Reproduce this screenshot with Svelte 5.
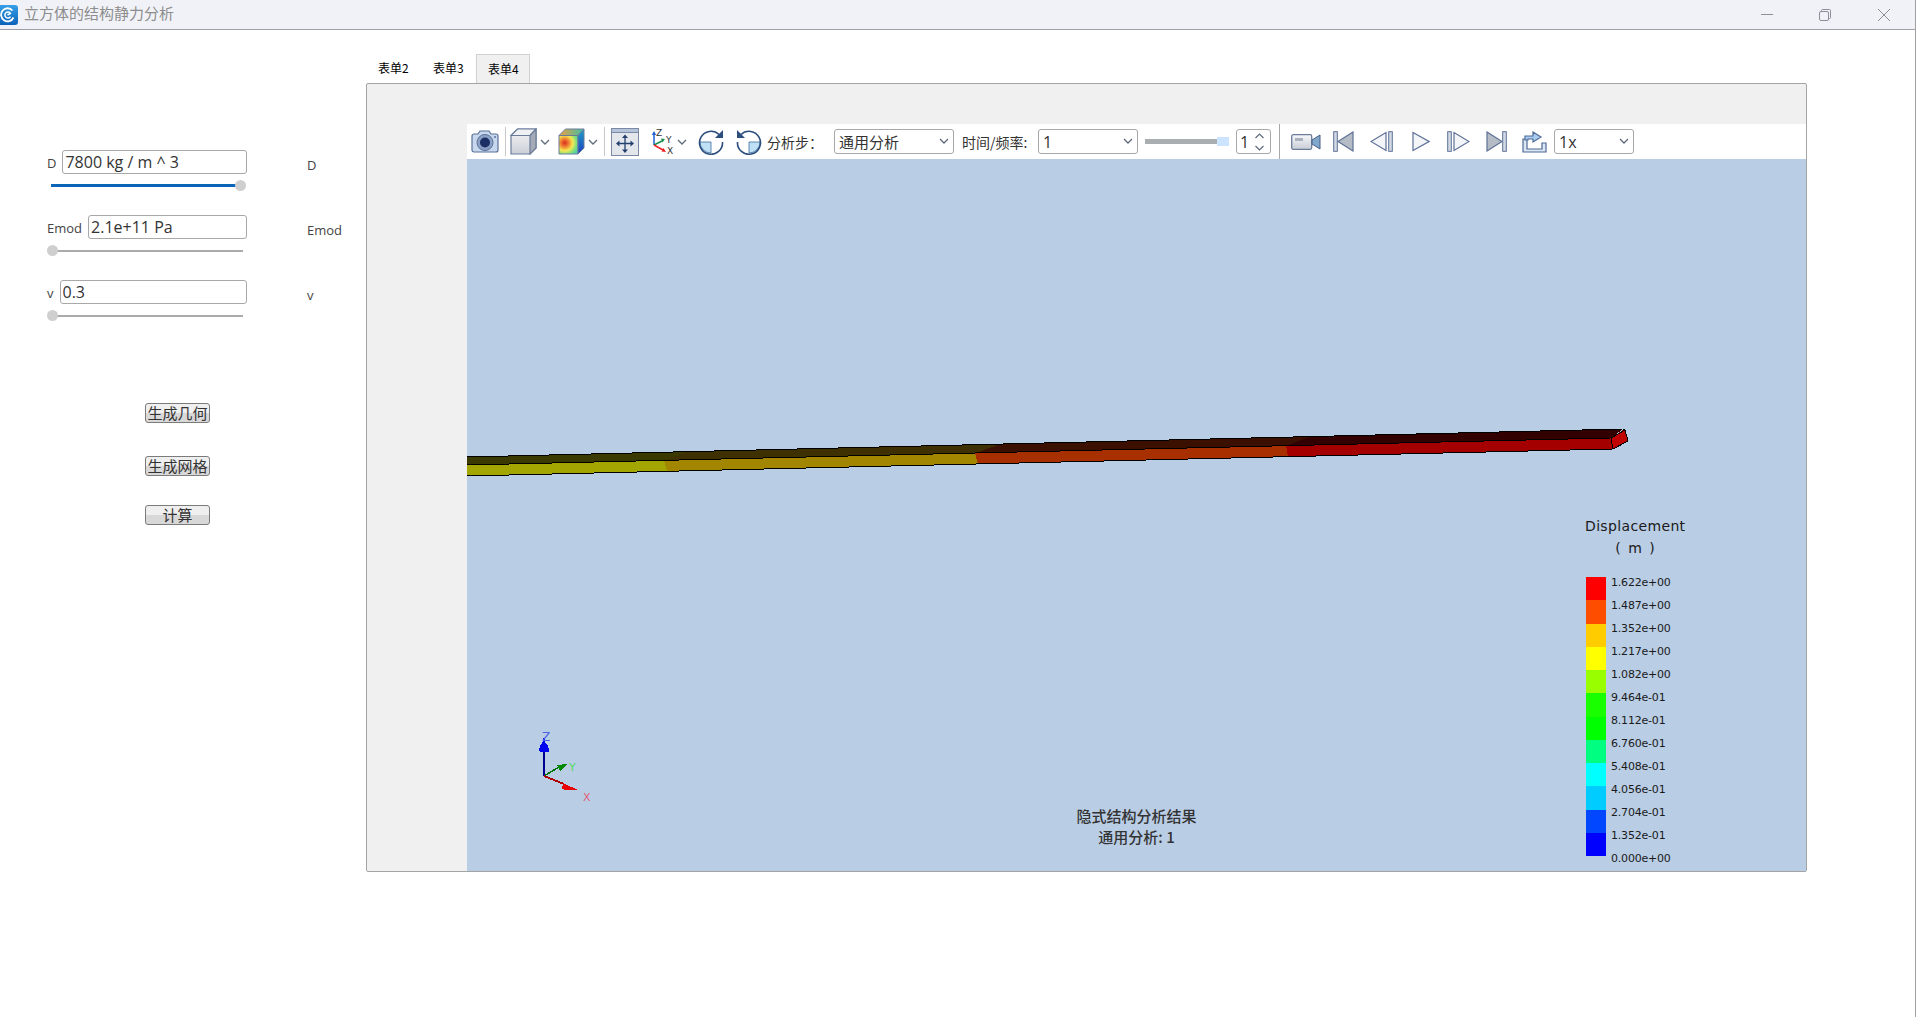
<script>
  const params = [
    { label: 'D', value: '7800 kg / m ^ 3', full: true },
    { label: 'Emod', value: '2.1e+11 Pa', full: false },
    { label: 'v', value: '0.3', full: false }
  ];
  const actions = [
    { text: '生成几何', cls: 'a1' },
    { text: '生成网格', cls: 'a2' },
    { text: '计算', cls: 'a3' }
  ];
  const tabs = ['表单2', '表单3', '表单4'];
  const colors = ['#ff0000', '#ff4d00', '#ffcc00', '#ffff00', '#99ff00', '#19ff00', '#00ff00', '#00ff80', '#00ffff', '#00ccff', '#0047ff', '#0000ff'];
  const labels = ['1.622e+00', '1.487e+00', '1.352e+00', '1.217e+00', '1.082e+00', '9.464e-01', '8.112e-01', '6.760e-01', '5.408e-01', '4.056e-01', '2.704e-01', '1.352e-01', '0.000e+00'];
</script>

{#snippet chev(cls)}
  <svg class={cls} width="10" height="6" viewBox="0 0 10 6"><path d="M1 1l4 4 4-4" fill="none" stroke="#5f6b7a" stroke-width="1.3"/></svg>
{/snippet}

<div class="window">
  <header class="titlebar">
    <svg class="appicon" width="18" height="20" viewBox="0 0 18 20">
      <defs><linearGradient id="ai" x1="0" y1="0" x2="0" y2="1"><stop offset="0" stop-color="#35a0e8"/><stop offset="1" stop-color="#0c62b8"/></linearGradient></defs>
      <path d="M-3 0h18a3 3 0 0 1 3 3v14a3 3 0 0 1-3 3h-18z" fill="url(#ai)"/>
      <path d="M13.500 12.500A6.500 6.500 0 1 1 12.500 5.500" fill="none" stroke="#fff" stroke-width="1.800"/>
      <path d="M10.500 11.500A3 3 0 1 1 10.500 8.500L7.500 10" fill="none" stroke="#fff" stroke-width="1.500"/>
    </svg>
    <span class="title">立方体的结构静力分析</span>
    <div class="winctl">
      <svg width="12" height="12" viewBox="0 0 12 12"><path d="M0 5.500h12" stroke="#8a8f98"/></svg>
      <svg class="restore" width="12" height="12" viewBox="0 0 12 12"><path d="M2.500 2.500v-1a1 1 0 0 1 1-1h7a1 1 0 0 1 1 1v7a1 1 0 0 1-1 1h-1" fill="none" stroke="#8a8f98"/><rect x=".5" y="2.500" width="9" height="9" rx="1.500" fill="none" stroke="#8a8f98"/></svg>
      <svg class="close" width="12" height="12" viewBox="0 0 12 12"><path d="M0 0l12 12M12 0L0 12" stroke="#8a8f98"/></svg>
    </div>
  </header>

  <div class="body">
    <aside class="sidebar">
      {#each params as p}
        <div class="param">
          <div class="pleft">
            <div class="field">
              <label for={'in' + p.label}>{p.label}</label>
              <input id={'in' + p.label} value={p.value} />
            </div>
            <div class="slider" class:full={p.full}><span class="thumb"></span></div>
          </div>
          <span class="echo">{p.label}</span>
        </div>
      {/each}
      <div class="actions">
        {#each actions as a}
          <button class={a.cls}>{a.text}</button>
        {/each}
      </div>
    </aside>

    <section class="workspace">
      <nav class="tabs">
        {#each tabs as t, i}
          <span class="tab" class:active={i === 2}>{t}</span>
        {/each}
      </nav>
      <div class="panel">
        <div class="toolbar">
          <svg class="ml4" width="28" height="23" viewBox="0 0 28 23">
            <path d="M1 6a2 2 0 0 1 2-2h4l2-3h9l2 3h5a2 2 0 0 1 2 2v14a2 2 0 0 1-2 2H3a2 2 0 0 1-2-2z" fill="#c7d8ee" stroke="#5a7098" stroke-width="1.2"/>
            <circle cx="14" cy="12.500" r="8" fill="#8ba2c6" stroke="#5a7098"/>
            <circle cx="14" cy="12.500" r="5" fill="#1c2f64"/>
            <circle cx="24" cy="7" r="1" fill="#5a7098"/>
          </svg>
          <span class="sep ml6"></span>
          <svg class="ml4" width="27" height="27" viewBox="0 0 27 27">
            <defs><linearGradient id="cf" x1="0" y1="0" x2="0" y2="1"><stop offset="0" stop-color="#f4f5f7"/><stop offset="1" stop-color="#ccd0d7"/></linearGradient></defs>
            <path d="M1 7.500L7.500 1H26v19l-6 6H1z" fill="url(#cf)" stroke="#6b7c9b" stroke-width="1.2"/>
            <path d="M1 7.500h19L26 1H7.500z" fill="#eef0f3" stroke="#6b7c9b" stroke-width="1.2"/>
            <path d="M20 7.500L26 1v19l-6 6z" fill="#a5abb6" stroke="#6b7c9b" stroke-width="1.2"/>
          </svg>
          {@render chev('ml3')}
          <svg class="ml8" width="27" height="27" viewBox="0 0 27 27">
            <defs>
              <radialGradient id="cc" cx=".3" cy=".4" r="1"><stop offset="0" stop-color="#d8301f"/><stop offset=".2" stop-color="#ee7a32"/><stop offset=".42" stop-color="#f5e850"/><stop offset=".68" stop-color="#66dd88"/><stop offset="1" stop-color="#40b0f0"/></radialGradient>
              <linearGradient id="ct" x1="0" y1="0" x2="1" y2="0"><stop offset="0" stop-color="#eda040"/><stop offset="1" stop-color="#3cc0a8"/></linearGradient>
              <linearGradient id="cs" x1="0" y1="0" x2="0" y2="1"><stop offset="0" stop-color="#1fa0c8"/><stop offset="1" stop-color="#1a3fc0"/></linearGradient>
            </defs>
            <path d="M1 7.500h19v18.500H1z" fill="url(#cc)" stroke="#6b7c9b"/>
            <path d="M1 7.500h19L26 1H7.500z" fill="url(#ct)" stroke="#6b7c9b"/>
            <path d="M20 7.500L26 1v19l-6 6z" fill="url(#cs)" stroke="#6b7c9b"/>
          </svg>
          {@render chev('ml3')}
          <span class="sep ml6"></span>
          <svg class="ml6" width="28" height="28" viewBox="0 0 28 28">
            <rect x=".5" y=".5" width="27" height="27" fill="#e3e6eb" stroke="#7a8aa6"/>
            <rect x=".5" y=".5" width="27" height="4" fill="#b6c4da" stroke="#7a8aa6"/>
            <path d="M14 9v13M8 15.500h12" stroke="#24406e" stroke-width="1.300"/>
            <path d="M14 6.500l-3 3.500h6zM14 25l-3-3.500h6zM5 15.500l3.500-3v6zM23 15.500l-3.500-3v6z" fill="#24406e"/>
          </svg>
          <svg class="ml12" width="22" height="27" viewBox="0 0 22 27">
            <path d="M3 17V6" stroke="#1f5fd0" stroke-width="1.500"/><path d="M3 3L.8 7h4.400z" fill="#1f5fd0"/>
            <path d="M3 17l8-4" stroke="#12904a" stroke-width="1.500"/><path d="M14 11l-4-.5 1.500 4z" fill="#12904a"/>
            <path d="M3 17l9 5" stroke="#e22" stroke-width="1.500"/><path d="M15 24l-4.500-.5 2-3.500z" fill="#e22"/>
            <text class="axl" x="5" y="8">Z</text><text class="axl" x="15" y="15">Y</text><text class="axl" x="16" y="26">X</text>
          </svg>
          {@render chev('ml4')}
          <svg class="ml11" width="26" height="26" viewBox="0 0 26 26">
            <path d="M13 13V24A11 11 0 0 1 2 13z" fill="#bfe0f5" stroke="#3d6f9f" stroke-width=".8"/>
            <path d="M21 5.500A11.500 11.500 0 1 0 24.500 13" fill="none" stroke="#2d4f7e" stroke-width="1.600"/>
            <path d="M25 1v8h-8z" fill="#2d4f7e"/>
          </svg>
          <svg class="ml12" width="26" height="26" viewBox="0 0 26 26">
            <path d="M13 13V24A11 11 0 0 0 24 13z" fill="#bfe0f5" stroke="#3d6f9f" stroke-width=".8"/>
            <path d="M5 5.500A11.500 11.500 0 1 1 1.500 13" fill="none" stroke="#2d4f7e" stroke-width="1.600"/>
            <path d="M1 1v8h8z" fill="#2d4f7e"/>
          </svg>
          <span class="tlabel lstep">分析步：</span>
          <div class="sel s1"><select><option>通用分析</option></select>{@render chev('arrow')}</div>
          <span class="tlabel ltime">时间/频率:</span>
          <div class="sel s2"><select><option>1</option></select>{@render chev('arrow')}</div>
          <div class="hslider"><span class="hthumb"></span></div>
          <div class="spin">
            <span>1</span>
            <svg width="11" height="20" viewBox="0 0 11 20"><path d="M1.500 6l4-4 4 4M1.500 14l4 4 4-4" fill="none" stroke="#5f6b7a" stroke-width="1.200"/></svg>
          </div>
          <span class="sep tall"></span>
          <svg class="ml11" width="30" height="16" viewBox="0 0 30 16">
            <defs><linearGradient id="vc" x1="0" y1="0" x2="0" y2="1"><stop offset="0" stop-color="#f6f7f9"/><stop offset="1" stop-color="#c9ced6"/></linearGradient></defs>
            <rect x=".7" y=".7" width="20" height="14.600" rx="1.500" fill="url(#vc)" stroke="#6b7c9b" stroke-width="1.300"/>
            <rect x="4" y="4" width="8" height="3" fill="#aab1bd"/>
            <path d="M21 6l8-5v14l-8-5z" fill="#7fa8cc" stroke="#4a5f86"/>
          </svg>
          <svg class="ml12" width="21" height="21" viewBox="0 0 21 21">
            <rect x=".7" y=".7" width="3.600" height="19.600" fill="#d4dae4" stroke="#5d7196"/>
            <path d="M20 1v19L5 10.500z" fill="#b6bcc6" stroke="#5d7196" stroke-width="1.200"/>
          </svg>
          <svg class="ml16" width="23" height="21" viewBox="0 0 23 21">
            <path d="M16 1.500v18L1 10.500z" fill="#f3f5f8" stroke="#5d7196" stroke-width="1.200"/>
            <rect x="18.700" y=".7" width="3.600" height="19.600" fill="#d4dae4" stroke="#5d7196"/>
          </svg>
          <svg class="ml19" width="18" height="21" viewBox="0 0 18 21">
            <path d="M1 1.500v18l16-9z" fill="#f3f5f8" stroke="#5d7196" stroke-width="1.200"/>
          </svg>
          <svg class="ml17" width="23" height="21" viewBox="0 0 23 21">
            <rect x=".7" y=".7" width="3.600" height="19.600" fill="#d4dae4" stroke="#5d7196"/>
            <path d="M7 1.500v18l15-9z" fill="#f3f5f8" stroke="#5d7196" stroke-width="1.200"/>
          </svg>
          <svg class="ml16" width="21" height="21" viewBox="0 0 21 21">
            <path d="M1 1v19l15-9.500z" fill="#b6bcc6" stroke="#5d7196" stroke-width="1.200"/>
            <rect x="16.700" y=".7" width="3.600" height="19.600" fill="#d4dae4" stroke="#5d7196"/>
          </svg>
          <svg class="ml15" width="25" height="22" viewBox="0 0 25 22">
            <path d="M1 8V21H24V12H20V18H5V8Z" fill="#dbe7f5" stroke="#4f6a94" stroke-width="1.200"/>
            <path d="M3 9V5H11V1L19 6L11 11V8H6V9Z" fill="#a9cdf0" stroke="#4f6a94" stroke-width="1.200"/>
          </svg>
          <div class="sel s3"><select><option>1x</option></select>{@render chev('arrow')}</div>
        </div>

        <div class="viewport">
          <svg class="scene" viewBox="467 159 1339 712" shape-rendering="crispEdges">
            <g transform="translate(0 1)">
              <polygon points="467,456 688,450.700 665,459.300 467,464" fill="#3a3a00"/>
              <polygon points="688,450.700 1000,443.100 976,452 665,459.300" fill="#3e3000"/>
              <polygon points="1000,443.100 1310,435.600 1287,444.600 976,452" fill="#3b1000"/>
              <polygon points="1310,435.600 1623,428 1611,437 1287,444.600" fill="#330000"/>
              <polygon points="467,464 664,459.300 667,470.300 467,475" fill="#a3a500"/>
              <polygon points="664,459.300 975,452 978,463 667,470.300" fill="#a38600"/>
              <polygon points="975,452 1286,444.600 1288,455.600 978,463" fill="#a83000"/>
              <polygon points="1286,444.600 1611,437 1613,448 1288,455.600" fill="#a40000"/>
              <polygon points="1611,437 1624,428.500 1628,440 1613,448" fill="#c00000"/>
              <path d="M467 456L1623 428M467 464L1611 437M467 475L1613 448M1611 437L1613 448M1623 428L1625 429L1628 440L1613 448M1611 437L1625 429" fill="none" stroke="#000"/>
            </g>
            <path d="M544 776V745" stroke="#000090" stroke-width="2"/>
            <path d="M544 735l-1 6-1 3-2 1-1 6 1 1h8l1-1-1-6-2-1-1-3z" fill="#0000f0"/>
            <path d="M544 776l15-9" stroke="#007000" stroke-width="1.500"/>
            <path d="M567 764l-10 1 3 6z" fill="#008a00"/>
            <path d="M544 776l20 8" stroke="#b00000" stroke-width="2"/>
            <path d="M578 790l-15-7-1 6 4 1z" fill="#e80000"/>
            <text class="zl" x="542" y="741">Z</text>
            <text class="yl" x="569" y="771">Y</text>
            <text class="xl" x="583" y="801">X</text>
          </svg>

          <div class="legend">
            <div class="ltitle">Displacement</div>
            <div class="lunit">( m )</div>
            <div class="lbody">
              <div class="swatches">
                {#each colors as c}<span style:background={c}></span>{/each}
              </div>
              <div class="ticks">
                {#each labels as l}<span>{l}</span>{/each}
              </div>
            </div>
          </div>

          <div class="note">
            <div>隐式结构分析结果</div>
            <div>通用分析: 1</div>
          </div>
        </div>
      </div>
    </section>
  </div>
</div>

<style>
  :global(body) { margin: 0; background: #fff; }
  .window {
    height: 1017px; box-sizing: border-box; border-right: 1px solid #a0a0a0;
    display: flex; flex-direction: column; overflow: hidden;
    font-family: "Open Sans", "Noto Sans CJK SC", sans-serif; color: #333;
  }
  .titlebar {
    height: 29px; flex: none; background: #f0f2f8; border-bottom: 1px solid #a0a0a4;
    display: flex; align-items: center;
  }
  .title { margin: 0 0 3px 6px; font: 15px/20px "Noto Sans CJK SC", sans-serif; color: #8d8d8d; }
  .winctl { margin-left: auto; display: flex; margin-right: 25px; }
  .winctl svg { display: block; }
  .winctl .restore { margin-left: 46px; }
  .winctl .close { margin-left: 47px; }

  .body { display: flex; flex: 1; }
  .sidebar { width: 366px; flex: none; padding: 120px 0 0 47px; box-sizing: border-box; }
  .param { display: flex; height: 65px; }
  .pleft { width: 200px; flex: none; }
  .field { display: flex; align-items: center; height: 24px; gap: 6px; }
  .field label { font-size: 13px; line-height: 24px; padding-top: 1px; color: #444; }
  .field input {
    flex: 1; min-width: 0; height: 24px; box-sizing: border-box; border: 1px solid #a8a8a8; border-radius: 3px;
    padding: 0 2px; font: 16px "Open Sans", sans-serif; color: #333; background: #fff; outline: none;
  }
  .slider { position: relative; height: 2px; background: #ababab; margin: 11px 0 0 5px; width: 191px; }
  .slider.full { background: #0a64b8; height: 3px; width: 190px; margin-left: 4px; margin-top: 10px; }
  .thumb { position: absolute; left: -5px; top: -5px; width: 11px; height: 11px; border-radius: 50%; background: #cfcfcf; }
  .slider.full .thumb { left: auto; right: -5px; top: -4px; }
  .echo { margin: 4px 0 0 60px; font-size: 13px; line-height: 22px; color: #444; }
  .actions { display: flex; flex-direction: column; align-items: flex-start; padding: 58px 0 0 98px; }
  button {
    width: 65px; height: 20px; padding: 0; border: 1px solid #7b7b7b; border-radius: 3px;
    background: linear-gradient(#efefef 50%, #d8d8d8 50%); color: #333;
    font: 15px/18px "Noto Sans CJK SC", sans-serif; white-space: nowrap;
  }
  .a2 { margin-top: 33px; }
  .a3 { margin-top: 29px; }

  .workspace { width: 1441px; flex: none; padding-top: 24px; }
  .tabs { display: flex; height: 29px; }
  .tab {
    width: 55px; box-sizing: border-box; padding-left: 12px; font: 12px/28px "Noto Sans CJK SC", sans-serif; color: #000;
  }
  .tab.active { width: 54px; padding-left: 11px; background: #f0f0f0; border: 1px solid #d0d0d0; border-bottom: 0; }
  .panel {
    height: 789px; box-sizing: border-box; border: 1px solid #a4a4a4; border-radius: 2px;
    background: #f0f0f0; padding: 40px 0 0 100px; display: flex; flex-direction: column;
  }
  .toolbar { height: 35px; flex: none; background: #fff; display: flex; align-items: center; }
  .toolbar > svg { flex: none; display: block; }
  .sep { width: 1px; height: 29px; background: #c8c8c8; flex: none; }
  .sep.tall { height: 35px; background: #a8a8a8; margin-left: 8px; }
  .toolbar > :global(.ml3) { margin-left: 3px; }
  .toolbar > :global(.ml4) { margin-left: 4px; }
  .ml6 { margin-left: 6px; } .ml8 { margin-left: 8px; }
  .ml11 { margin-left: 11px; } .ml12 { margin-left: 12px; } .ml15 { margin-left: 15px; }
  .ml16 { margin-left: 16px; } .ml17 { margin-left: 17px; } .ml19 { margin-left: 19px; }
  .axl { font: 9px "DejaVu Sans", sans-serif; fill: #333; }
  .tlabel { font: 14px "Noto Sans CJK SC", sans-serif; color: #333; flex: none; white-space: nowrap; }
  .lstep { margin-left: 5px; width: 67px; }
  .ltime { margin-left: 8px; width: 76px; }
  .sel { position: relative; height: 25px; flex: none; }
  .s1 { width: 120px; } .s2 { width: 100px; } .s3 { width: 80px; margin-left: 7px; }
  .sel select {
    appearance: none; width: 100%; height: 100%; box-sizing: border-box; border: 1px solid #a8a8a8; border-radius: 3px;
    background: #fff; padding: 0 0 0 4px; font: 15px "Open Sans", "Noto Sans CJK SC", sans-serif; color: #333; outline: none;
  }
  .s2 select, .s3 select { font-size: 16px; }
  .sel :global(.arrow) { position: absolute; right: 5px; top: 9px; pointer-events: none; }
  .hslider { position: relative; width: 84px; height: 5px; margin-left: 7px; background: #a9aeb1; flex: none; }
  .hthumb { position: absolute; right: 0; top: -2px; width: 12px; height: 9px; background: #cce4ff; }
  .spin {
    width: 35px; height: 25px; margin-left: 7px; box-sizing: border-box; border: 1px solid #a8a8a8; border-radius: 3px; flex: none;
    display: flex; align-items: center; justify-content: space-between; padding: 0 5px 0 3px; font-size: 16px;
  }
  .spin svg { display: block; }

  .viewport { flex: 1; position: relative; background: #b9cde5; overflow: hidden; }
  .scene { position: absolute; left: 0; top: 0; width: 1339px; height: 712px; display: block; }
  .zl { font: 12px "DejaVu Sans", sans-serif; fill: #4a5fe8; }
  .yl { font: 11px "DejaVu Sans", sans-serif; fill: #55dd66; }
  .xl { font: 11px "DejaVu Sans", sans-serif; fill: #e0607a; }
  .legend { position: absolute; left: 1118px; top: 356px; width: 120px; font-family: "DejaVu Sans", sans-serif; color: #1a1a1a; }
  .ltitle { font-size: 14px; line-height: 22px; letter-spacing: .35px; white-space: nowrap; }
  .lunit { font-size: 14px; line-height: 22px; width: 100px; text-align: center; word-spacing: 3px; }
  .lbody { display: flex; margin: 18px 0 0 1px; }
  .swatches { width: 20px; height: 279px; display: flex; flex-direction: column; }
  .swatches span { flex: 1; }
  .ticks { display: flex; flex-direction: column; margin-left: 5px; }
  .ticks span { height: 23px; line-height: 11px; font-size: 11px; letter-spacing: -.2px; white-space: nowrap; }
  .note {
    position: absolute; left: 570px; top: 646px; width: 199px; text-align: center;
    font: 500 15px/21px "Noto Sans CJK SC", sans-serif; color: #333;
  }
</style>
